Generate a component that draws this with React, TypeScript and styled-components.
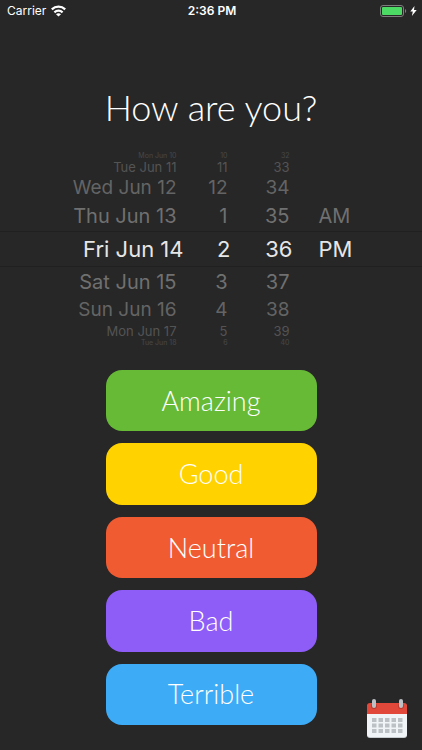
import React, { useState } from "react";
import styled, { createGlobalStyle } from "styled-components";

const GlobalStyle = createGlobalStyle`
  *, *::before, *::after { box-sizing: border-box; }
  body { margin: 0; background: #272727; }
`;

const Screen = styled.div`
  min-height: 100vh;
  display: flex;
  flex-direction: column;
  padding-bottom: 25px;
  background: #272727;
  color: #fff;
  font-family: Inter, "Liberation Sans", sans-serif;
`;

const StatusBar = styled.header`
  display: grid;
  grid-template-columns: 1fr auto 1fr;
  align-items: center;
  height: 22px;
  padding: 0 5px 0 7px;
  font-size: 12px;
  line-height: 16px;
`;

const StatusGroup = styled.div<{ $end?: boolean }>`
  display: flex;
  align-items: center;
  justify-content: ${(p) => (p.$end ? "flex-end" : "flex-start")};
  gap: ${(p) => (p.$end ? 3 : 5)}px;
`;

const Clock = styled.time`
  font-weight: 600;
`;

const Title = styled.h1`
  margin: 61px 0 0;
  text-align: center;
  font-family: Lato, "Open Sans", sans-serif;
  font-size: 36px;
  line-height: 48px;
  font-weight: 300;
`;

const Picker = styled.div`
  position: relative;
  display: grid;
  grid-template-columns: 114px 47px 62px 60px;
  justify-content: center;
  margin-top: 21px;
`;

const SelectionBand = styled.div`
  position: absolute;
  inset: 79px 0;
  border: solid #202020;
  border-width: 1px 0;
  pointer-events: none;
`;

const Wheel = styled.ul<{ $start?: boolean }>`
  margin: 0;
  padding: 0 0 0 ${(p) => (p.$start ? 26 : 0)}px;
  list-style: none;
  white-space: nowrap;
  text-align: ${(p) => (p.$start ? "left" : "right")};
`;

const rings = [
  { height: 36, size: 22, color: "#e6e6e6" },
  { height: 30, size: 20, color: "#707070" },
  { height: 26, size: 19, color: "#646464" },
  { height: 16, size: 13, color: "#545454" },
  { height: 7, size: 7, color: "#484848" },
];

const WheelItem = styled.li<{ $ring: number; $inset: number }>`
  height: ${(p) => rings[p.$ring].height}px;
  line-height: ${(p) => rings[p.$ring].height}px;
  font-size: ${(p) => rings[p.$ring].size}px;
  color: ${(p) => rings[p.$ring].color};
  padding-right: ${(p) => (p.$ring ? p.$inset : 0)}px;
`;

const Moods = styled.main`
  flex: 1;
  display: flex;
  flex-direction: column;
  gap: 12px;
  width: 50%;
  margin: 24px auto 0;
`;

const MoodButton = styled.button<{ $color: string }>`
  flex: 1;
  min-height: 48px;
  padding: 0;
  border: 0;
  border-radius: 16px;
  background: ${(p) => p.$color};
  color: #fff;
  font-family: Lato, "Open Sans", sans-serif;
  font-size: 27px;
  line-height: 36px;
  font-weight: 300;
  cursor: pointer;
`;

const CalendarButton = styled.button`
  position: fixed;
  right: 14px;
  bottom: 11px;
  display: flex;
  padding: 0;
  border: 0;
  background: none;
  cursor: pointer;
`;

const wheels = [
  {
    label: "Date",
    inset: 7,
    values: [
      "Mon Jun 10", "Tue Jun 11", "Wed Jun 12", "Thu Jun 13", "Fri Jun 14",
      "Sat Jun 15", "Sun Jun 16", "Mon Jun 17", "Tue Jun 18",
    ],
  },
  { label: "Hour", inset: 3, values: ["10", "11", "12", "1", "2", "3", "4", "5", "6"] },
  { label: "Minute", inset: 3, values: ["32", "33", "34", "35", "36", "37", "38", "39", "40"] },
  { label: "AM or PM", inset: 0, start: true, values: ["", "", "", "AM", "PM"] },
];

const moods = [
  { name: "Amazing", color: "#67ba36" },
  { name: "Good", color: "#ffd200" },
  { name: "Neutral", color: "#f05b32" },
  { name: "Bad", color: "#8e5cf7" },
  { name: "Terrible", color: "#3eabf7" },
];

function WifiIcon() {
  return (
    <svg width="15" height="12" viewBox="0 0 15 12" fill="none" stroke="#fff" strokeWidth="2.3" aria-label="Wi-Fi">
      <path d="M.8 4.300C4.600.8 10.400.8 14.200 4.300" />
      <path d="M3.400 7.300c2.400-2.100 5.800-2.100 8.200 0" />
      <path d="M7.500 11.600 5 9.200c1.500-1.300 3.500-1.300 5 0z" fill="#fff" stroke="none" />
    </svg>
  );
}

function BatteryIcon() {
  return (
    <svg width="27" height="12" viewBox="0 0 27 12" aria-label="Battery full">
      <rect x="0.5" y="0.5" width="23" height="11" rx="2.5" fill="none" stroke="#7d7d7d" />
      <rect x="2" y="2" width="20" height="8" rx="1" fill="#4cd964" />
      <path d="M25 4c1.600.5 1.600 3.500 0 4z" fill="#7d7d7d" />
    </svg>
  );
}

function BoltIcon() {
  return (
    <svg width="7" height="10" viewBox="0 0 7 10" fill="#fff" aria-label="Charging">
      <path d="M4.500 0 .3 5.600h2.500L1.900 10l4.800-6H4z" />
    </svg>
  );
}

function CalendarIcon() {
  return (
    <svg width="42" height="40" viewBox="0 0 42 40" aria-hidden="true">
      <rect x="1" y="5" width="40" height="34" rx="3" fill="#c6ccd0" />
      <path d="M1 14h40v21a3 3 0 0 1-3 3H4a3 3 0 0 1-3-3z" fill="#f1f4f6" />
      <path d="M1 15V7a3 3 0 0 1 3-3h34a3 3 0 0 1 3 3v8z" fill="#e2483a" />
      {[8, 35].map((x) => (
        <g key={x}>
          <circle cx={x} cy="7" r="3" fill="#b93a30" />
          <rect x={x - 2} y="0" width="4" height="9" rx="2" fill="#bdc1c5" />
        </g>
      ))}
      {[19, 24.5, 30].map((y) =>
        [6, 12.5, 19, 25.5, 32].map((x) => (
          <rect key={`${x}-${y}`} x={x} y={y} width="4.5" height="4" fill="#bcc1c5" />
        ))
      )}
    </svg>
  );
}

export default function App() {
  const [mood, setMood] = useState<string | null>(null);

  return (
    <>
      <GlobalStyle />
      <Screen>
        <StatusBar>
          <StatusGroup>
            <span>Carrier</span>
            <WifiIcon />
          </StatusGroup>
          <Clock>2:36 PM</Clock>
          <StatusGroup $end>
            <BatteryIcon />
            <BoltIcon />
          </StatusGroup>
        </StatusBar>

        <Title>How are you?</Title>

        <Picker>
          <SelectionBand />
          {wheels.map((wheel) => (
            <Wheel key={wheel.label} role="listbox" aria-label={wheel.label} $start={wheel.start}>
              {wheel.values.map((value, i) => (
                <WheelItem
                  key={i}
                  role={value ? "option" : "presentation"}
                  aria-selected={value ? i === 4 : undefined}
                  $ring={Math.abs(i - 4)}
                  $inset={wheel.inset}
                >
                  {value}
                </WheelItem>
              ))}
            </Wheel>
          ))}
        </Picker>

        <Moods>
          {moods.map(({ name, color }) => (
            <MoodButton
              key={name}
              type="button"
              $color={color}
              aria-pressed={mood === name}
              onClick={() => setMood(name)}
            >
              {name}
            </MoodButton>
          ))}
        </Moods>

        <CalendarButton type="button" aria-label="Open calendar">
          <CalendarIcon />
        </CalendarButton>
      </Screen>
    </>
  );
}
